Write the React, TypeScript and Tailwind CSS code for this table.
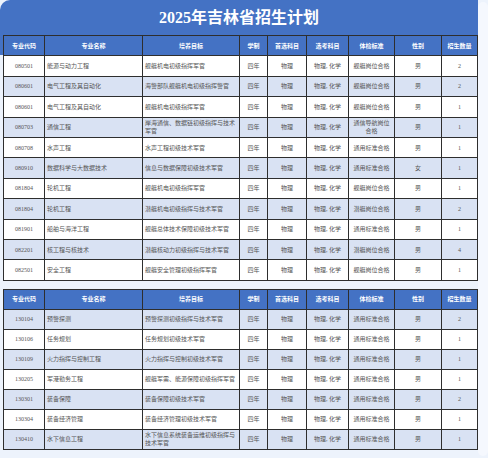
const headers = ['专业代码', '专业名称', '培养目标', '学制', '首选科目', '选考科目', '体检标准', '性别', '招生数量'];
const widths = [41, 98, 97, 28, 39, 42, 46, 47, 36];

type Row = [string, string, string, string, string, string];

// code, name, goal, physical standard, gender, count
const planA: Row[] = [
  ['080501', '能源与动力工程', '舰艇机电初级指挥军官', '舰艇岗位合格', '男', '2'],
  ['080601', '电气工程及其自动化', '海警部队舰艇机电初级指挥警官', '舰艇岗位合格', '男', '2'],
  ['080601', '电气工程及其自动化', '舰艇机电初级指挥军官', '舰艇岗位合格', '男', '1'],
  ['080703', '通信工程', '岸海通信、数据链初级指挥与技术军官', '通信导航岗位合格', '男', '1'],
  ['080708', '水声工程', '水声工程初级技术军官', '通用标准合格', '男', '1'],
  ['080910', '数据科学与大数据技术', '信息与数据保障初级技术军官', '通用标准合格', '女', '1'],
  ['081804', '轮机工程', '舰艇机电初级指挥军官', '舰艇岗位合格', '男', '1'],
  ['081804', '轮机工程', '潜艇机电初级指挥与技术军官', '潜艇岗位合格', '男', '2'],
  ['081901', '船舶与海洋工程', '舰艇总体技术保障初级技术军官', '通用标准合格', '男', '1'],
  ['082201', '核工程与核技术', '潜艇核动力初级指挥与技术军官', '潜艇岗位合格', '男', '4'],
  ['082501', '安全工程', '舰艇安全管理初级指挥军官', '舰艇岗位合格', '男', '1'],
];

const planB: Row[] = [
  ['130104', '预警探测', '预警探测初级指挥与技术军官', '通用标准合格', '男', '2'],
  ['130106', '任务规划', '任务规划初级技术军官', '通用标准合格', '男', '1'],
  ['130109', '火力指挥与控制工程', '火力指挥与控制初级技术军官', '通用标准合格', '男', '1'],
  ['130205', '军港勤务工程', '舰艇军需、能源保障初级指挥军官', '通用标准合格', '男', '1'],
  ['130301', '装备保障', '装备保障初级技术军官', '通用标准合格', '男', '2'],
  ['130304', '装备经济管理', '装备经济管理初级技术军官', '通用标准合格', '男', '1'],
  ['130410', '水下信息工程', '水下信息系统装备运维初级指挥与技术军官', '通用标准合格', '男', '1'],
];

const cell = 'border border-[#2e2e2e] px-[2px] leading-[8px] align-middle';

function PlanTable({ rows, firstShaded, rowH }: { rows: Row[]; firstShaded: boolean; rowH: string }) {
  return (
    <table className="w-[474px] table-fixed border-collapse text-[6px] text-[#555] [font-family:'Liberation_Serif','Noto_Sans_CJK_SC',serif]">
      <colgroup>
        {widths.map((w, i) => (
          <col key={i} style={{ width: w }} />
        ))}
      </colgroup>
      <thead>
        <tr className={`${rowH} bg-[#4472c4]`}>
          {headers.map((h) => (
            <th key={h} className={`${cell} text-center font-bold text-white [font-family:'Noto_Sans_CJK_SC',sans-serif]`}>
              {h}
            </th>
          ))}
        </tr>
      </thead>
      <tbody>
        {rows.map((r, i) => {
          const shaded = (i % 2 === 0) === firstShaded;
          return (
            <tr key={i} className={`${rowH} ${shaded ? 'bg-[#d9e2f3]' : 'bg-white'}`}>
              <td className={`${cell} text-center`}>{r[0]}</td>
              <td className={`${cell} text-left`}>{r[1]}</td>
              <td className={`${cell} text-left`}>{r[2]}</td>
              <td className={`${cell} text-center`}>四年</td>
              <td className={`${cell} text-center`}>物理</td>
              <td className={`${cell} text-center`}>物理, 化学</td>
              <td className={`${cell} text-center`}>{r[3]}</td>
              <td className={`${cell} text-center`}>{r[4]}</td>
              <td className={`${cell} text-center`}>{r[5]}</td>
            </tr>
          );
        })}
      </tbody>
    </table>
  );
}

export default function App() {
  return (
    <div className="flex h-[458px] w-[488px] overflow-hidden bg-[#edf3fc]">
      <div className="w-[478px]">
        <div className="rounded-tl-[10px] bg-[linear-gradient(to_bottom,#4472c4_55px,transparent_55px)] pl-[3px]">
          <div className="-ml-[3px] flex h-[35px] items-center justify-center">
            <h1 className="text-[16px] font-bold text-white [font-family:'Liberation_Serif','Noto_Sans_CJK_SC',serif]">
              2025年吉林省招生计划
            </h1>
          </div>
          <PlanTable rows={planA} firstShaded={false} rowH="h-[20.4px]" />
        </div>
        <div className="mt-[8px] pl-[3px]">
          <PlanTable rows={planB} firstShaded={true} rowH="h-[20px]" />
        </div>
      </div>
      <div className="mt-[2px] mb-[2px] flex-1 rounded-[6px] bg-[#f5f8fe]" />
    </div>
  );
}
